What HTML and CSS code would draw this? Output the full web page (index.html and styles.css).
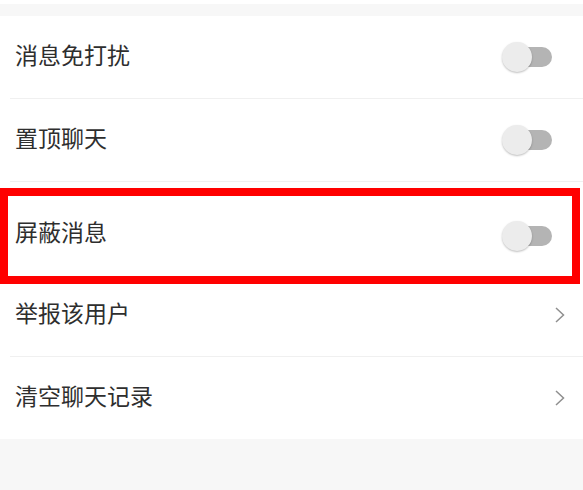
FILE: index.html
```html
<!DOCTYPE html>
<html lang="zh">
<head>
<meta charset="utf-8">
<link rel="stylesheet" href="styles.css">
</head>
<body>
<div class="page">
  <div class="top-gap"></div>
  <div class="list">
    <div class="row row-std">
      <span class="label">消息免打扰</span>
      <span class="toggle"><span class="track"></span><span class="knob"></span></span>
    </div>
    <div class="divider"></div>
    <div class="row row-std">
      <span class="label">置顶聊天</span>
      <span class="toggle"><span class="track"></span><span class="knob"></span></span>
    </div>
    <div class="divider"></div>
    <div class="highlight-wrap">
      <div class="row row-highlight">
        <span class="label">屏蔽消息</span>
        <span class="toggle"><span class="track"></span><span class="knob"></span></span>
      </div>
    </div>
    <div class="row row-after">
      <span class="label">举报该用户</span>
      <svg class="chevron" width="12" height="18" viewBox="0 0 12 18"><path d="M2 2 L9.5 9 L2 16" fill="none" stroke="#8f8f8f" stroke-width="1.5"/></svg>
    </div>
    <div class="divider"></div>
    <div class="row row-std">
      <span class="label">清空聊天记录</span>
      <svg class="chevron" width="12" height="18" viewBox="0 0 12 18"><path d="M2 2 L9.5 9 L2 16" fill="none" stroke="#8f8f8f" stroke-width="1.5"/></svg>
    </div>
  </div>
</div>
</body>
</html>
```
FILE: styles.css
```css
html, body {
  margin: 0;
  padding: 0;
}
body {
  background: #f7f7f7;
  font-family: "Noto Sans CJK SC", "Noto Sans", sans-serif;
  color: #333333;
}
.page {
  width: 583px;
  height: 490px;
  overflow: hidden;
}
.top-gap {
  height: 16px;
  border-top: 4px solid #ffffff;
  box-sizing: border-box;
}
.list {
  background: #ffffff;
  display: flex;
  flex-direction: column;
}
.row {
  display: flex;
  align-items: center;
  justify-content: space-between;
  box-sizing: border-box;
}
.row-std {
  height: 82px;
  padding: 0 17px 0 15px;
}
.row-after {
  height: 72px;
  padding: 0 17px 10px 15px;
}
.label {
  font-size: 23px;
  line-height: 1;
  padding-bottom: 5px;
  color: #2e2e2e;
}
.divider {
  height: 1px;
  margin-left: 10px;
  background: #f0f0f0;
}
.highlight-wrap {
  padding: 6px 3px 0 0;
}
.row-highlight {
  height: 96px;
  border: 8px solid #ff0000;
  padding: 0 6px 0 7px;
}
.row-highlight .label {
  padding-bottom: 9px;
}
.toggle {
  position: relative;
  width: 50px;
  height: 30px;
  margin-right: 14px;
}
.track {
  position: absolute;
  left: 8px;
  top: 5px;
  width: 42px;
  height: 20px;
  border-radius: 10px;
  background: #b4b4b4;
}
.knob {
  position: absolute;
  left: 0;
  top: 0;
  width: 30px;
  height: 30px;
  border-radius: 50%;
  background: #ececec;
  box-shadow: 0 1px 2px rgba(0, 0, 0, 0.25);
}
.chevron {
  display: block;
}
```
